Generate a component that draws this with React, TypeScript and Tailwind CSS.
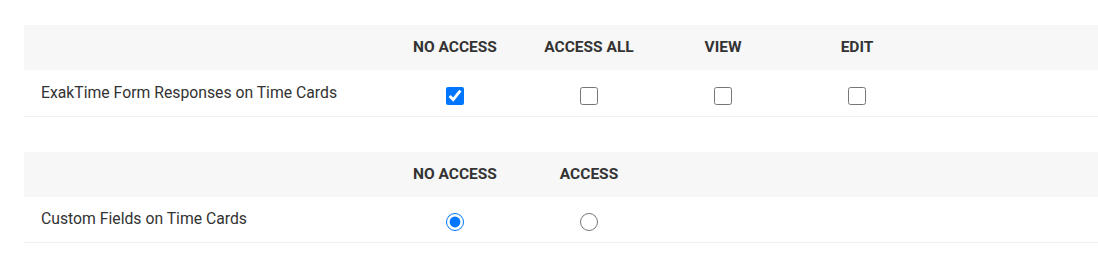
import React from "react";

type Section = {
  label: string;
  columns: string[];
  kind: "checkbox" | "radio";
  selected: number;
};

const sections: Section[] = [
  {
    label: "ExakTime Form Responses on Time Cards",
    columns: ["NO ACCESS", "ACCESS ALL", "VIEW", "EDIT"],
    kind: "checkbox",
    selected: 0,
  },
  {
    label: "Custom Fields on Time Cards",
    columns: ["NO ACCESS", "ACCESS"],
    kind: "radio",
    selected: 0,
  },
];

function PermissionTable({ section, name }: { section: Section; name: string }) {
  return (
    <table className="w-full table-fixed border-collapse">
      <colgroup>
        <col className="w-[364px]" />
        {section.columns.map((c) => (
          <col key={c} className="w-[134px]" />
        ))}
        <col />
      </colgroup>
      <thead>
        <tr className="h-[45px] bg-[#f7f7f7]">
          <th />
          {section.columns.map((c) => (
            <th
              key={c}
              className="text-center text-[15.5px] font-bold text-[#333333] align-middle pt-[1px]"
            >
              {c}
            </th>
          ))}
          <th />
        </tr>
      </thead>
      <tbody>
        <tr className="h-[46px] border-b border-[#f0f0f0]">
          <td className="pl-[17px] text-[15.75px] text-[#333333] align-middle">
            {section.label}
          </td>
          {section.columns.map((c, i) => (
            <td key={c} className="text-center align-middle">
              <input
                type={section.kind}
                name={name}
                defaultChecked={i === section.selected}
                className="m-0 mt-[4px] h-[18px] w-[18px] align-middle"
              />
            </td>
          ))}
          <td />
        </tr>
      </tbody>
    </table>
  );
}

export default function App() {
  return (
    <div
      className="h-[271px] w-[1098px] bg-white pl-6 pt-[25px]"
      style={{ fontFamily: "Roboto, 'Liberation Sans', sans-serif" }}
    >
      <div className="flex flex-col gap-[35px]">
        {sections.map((s, i) => (
          <PermissionTable key={s.label} section={s} name={`perm-${i}`} />
        ))}
      </div>
    </div>
  );
}
